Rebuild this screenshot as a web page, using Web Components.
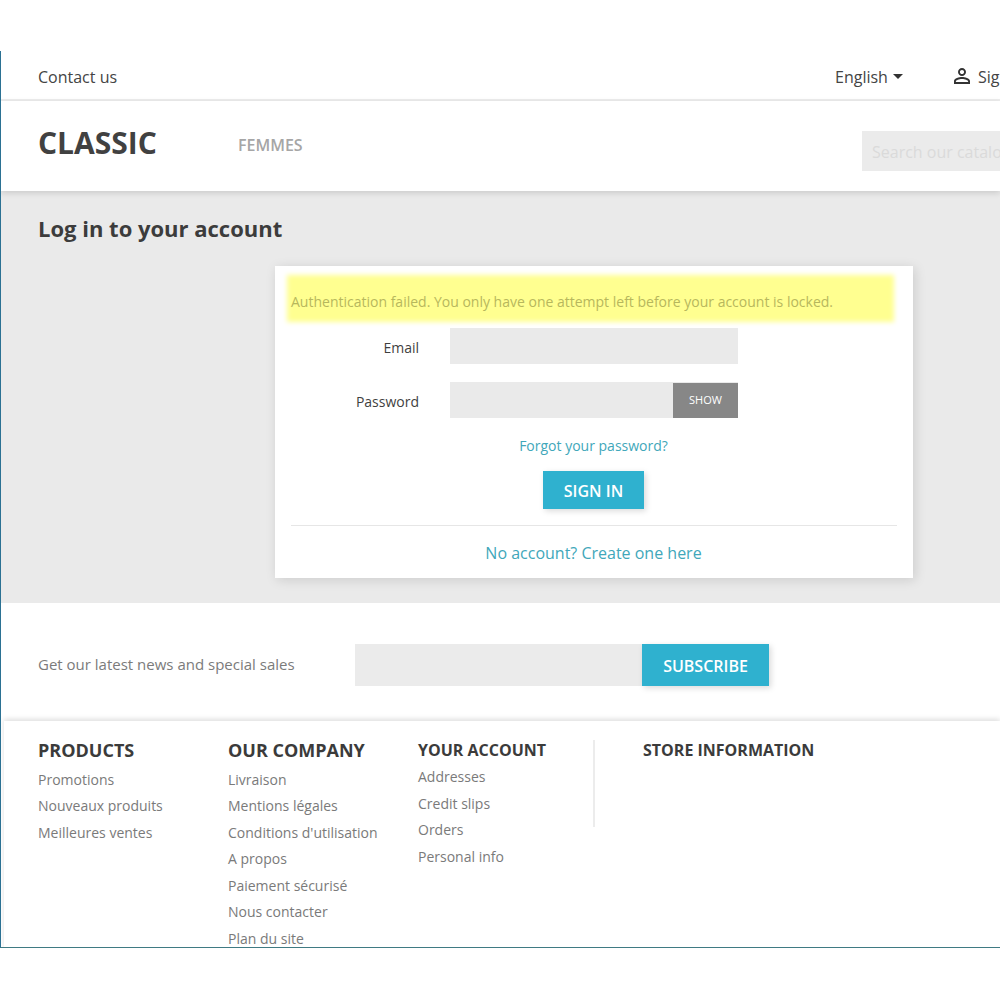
<!DOCTYPE html>
<html lang="en">
<head>
<meta charset="utf-8">
<title>Log in to your account</title>
<style>
  html, body { margin: 0; background: #fff; }
  body { font-family: "Open Sans", "Liberation Sans", sans-serif; padding-top: 51px; height: 949px; overflow: hidden; box-sizing: border-box; }
</style>
</head>
<body>
<shop-frame>
  <top-nav></top-nav>
  <shop-header></shop-header>
  <login-page></login-page>
  <news-letter></news-letter>
  <shop-footer>
    <footer-col slot="cols" heading="PRODUCTS" style="width:190px">
      <a>Promotions</a><a>Nouveaux produits</a><a>Meilleures ventes</a>
    </footer-col>
    <footer-col slot="cols" heading="OUR COMPANY" style="width:190px">
      <a>Livraison</a><a>Mentions légales</a><a>Conditions d'utilisation</a><a>A propos</a><a>Paiement sécurisé</a><a>Nous contacter</a><a>Plan du site</a>
    </footer-col>
    <footer-col slot="cols" heading="YOUR ACCOUNT" small style="width:175px">
      <a>Addresses</a><a>Credit slips</a><a>Orders</a><a>Personal info</a>
    </footer-col>
    <footer-col slot="store" heading="STORE INFORMATION" small></footer-col>
  </shop-footer>
</shop-frame>

<script>
// Small helper: every element gets an open shadow root from a string
class ShopElement extends HTMLElement {
  constructor() {
    super();
    const shadow = this.attachShadow({ mode: "open" });
    shadow.innerHTML = this.constructor.markup;
  }
}

class ShopFrame extends ShopElement {
  static markup = `
    <style>
      :host {
        display: block;
        height: 897px;
        overflow: hidden;
        box-sizing: border-box;
        border-left: 1px solid #2b7193;
        border-bottom: 1px solid #3f7a83;
        position: relative;
      }
    </style>
    <slot></slot>`;
}

class TopNav extends ShopElement {
  static markup = `
    <style>
      :host {
        display: flex;
        align-items: center;
        height: 48px;
        padding-left: 37px;
        border-bottom: 2px solid #ededed;
        color: #444;
        font-size: 16px;
        white-space: nowrap;
      }
      .contact { flex: 1; padding-top: 4px; }
      .lang { display: flex; align-items: center; gap: 5px; width: 115px; padding-top: 4px; }
      .caret { width: 0; height: 0; border: 5px solid transparent; border-top-color: #333; border-bottom: 0; margin-top: -2px; }
      .user { display: flex; align-items: center; gap: 4px; width: 50px; overflow: hidden; padding-top: 4px; flex: none; }
      svg { flex: none; display: block; width: 24px; height: 24px; fill: #333; margin-top: -2px; }
    </style>
    <span class="contact">Contact us</span>
    <span class="lang">English <i class="caret"></i></span>
    <span class="user">
      <svg viewBox="0 0 24 24"><path d="M12 5.9c1.16 0 2.1.94 2.1 2.1s-.94 2.1-2.1 2.1S9.9 9.16 9.9 8s.94-2.1 2.1-2.1m0 9c2.97 0 6.1 1.46 6.1 2.1v1.1H5.9V17c0-.64 3.13-2.1 6.1-2.1M12 4C9.79 4 8 5.79 8 8s1.79 4 4 4 4-1.79 4-4-1.79-4-4-4zm0 9c-2.67 0-8 1.34-8 4v3h16v-3c0-2.66-5.33-4-8-4z"/></svg>
      <span>Sign in</span>
    </span>`;
}

class ShopHeader extends ShopElement {
  static markup = `
    <style>
      :host {
        display: flex;
        align-items: center;
        height: 90px;
        padding-left: 37px;
        background: #fff;
        box-shadow: 0 2px 6px rgba(0,0,0,.14);
        position: relative;
        z-index: 1;
        white-space: nowrap;
      }
      .logo { width: 200px; font-size: 30px; font-weight: 700; color: #414141; padding-bottom: 7px; }
      .menu { flex: 1; font-size: 16px; font-weight: 600; color: #a6a6a6; padding-bottom: 3px; }
      .search {
        flex: none;
        width: 138px;
        height: 40px;
        margin-top: 10px;
        padding-left: 10px;
        box-sizing: border-box;
        background: #ebebeb;
        color: #dadada;
        font-size: 16px;
        line-height: 42px;
        overflow: hidden;
      }
    </style>
    <span class="logo">CLASSIC</span>
    <span class="menu">FEMMES</span>
    <div class="search">Search our catalog</div>`;
}

class LoginPage extends ShopElement {
  static markup = `
    <style>
      :host {
        display: block;
        height: 412px;
        box-sizing: border-box;
        background: #eaeaea;
        padding: 22px 0 0 37px;
      }
      h1 { margin: 0 0 23px; font-size: 22px; line-height: 30px; font-weight: 700; color: #3c3c3c; }
      login-card { margin-left: 237px; }
    </style>
    <h1>Log in to your account</h1>
    <login-card></login-card>`;
}

class LoginCard extends ShopElement {
  static markup = `
    <style>
      :host {
        display: block;
        width: 638px;
        height: 312px;
        box-sizing: border-box;
        background: #fff;
        padding: 9px 16px 0;
        box-shadow: 2px 2px 11px rgba(0,0,0,.13);
      }
      .alert {
        position: relative;
        height: 47px;
        margin: 0 3px 6px -4px;
        padding: 17px 0 0 4px;
        box-sizing: border-box;
        color: #b7b75d;
        font-size: 14px;
        line-height: 20px;
        white-space: nowrap;
      }
      /* the highlight has soft, hand-painted edges */
      .alert::before {
        content: "";
        position: absolute;
        inset: 0;
        background: #ffff90;
        filter: blur(2.5px);
      }
      .alert span { position: relative; }
      .row {
        display: grid;
        grid-template-columns: 128px 288px;
        column-gap: 31px;
        align-items: center;
        height: 36px;
        margin-bottom: 18px;
        color: #3f3f3f;
        font-size: 14px;
      }
      label { text-align: right; padding-top: 2px; }
      .input { height: 36px; background: #eaeaea; display: flex; justify-content: flex-end; align-items: flex-end; }
      .show {
        width: 65px;
        height: 35px;
        background: #878787;
        color: #fff;
        font-size: 11px;
        line-height: 33px;
        text-align: center;
      }
      .forgot { text-align: center; color: #41a7ba; font-size: 14px; line-height: 20px; width: 605px; }
      .action { display: flex; justify-content: center; margin: 15px 1px 0 0; }
      .signin {
        width: 101px;
        height: 38px;
        background: #2fb1cf;
        color: #fff;
        font-size: 16px;
        font-weight: 600;
        line-height: 40px;
        text-align: center;
        box-shadow: 2px 2px 6px rgba(0,0,0,.15);
      }
      hr { border: 0; border-top: 1px solid #e6e6e6; margin: 16px 0 0; }
      .create { text-align: center; color: #41a7ba; font-size: 16px; line-height: 22px; margin: 16px 1px 0 0; }
    </style>
    <div class="alert"><span>Authentication failed. You only have one attempt left before your account is locked.</span></div>
    <div class="row"><label>Email</label><div class="input"></div></div>
    <div class="row"><label>Password</label><div class="input"><span class="show">SHOW</span></div></div>
    <div class="forgot">Forgot your password?</div>
    <div class="action"><span class="signin">SIGN IN</span></div>
    <hr>
    <div class="create">No account? Create one here</div>`;
}

class NewsLetter extends ShopElement {
  static markup = `
    <style>
      :host {
        display: flex;
        align-items: center;
        height: 118px;
        padding: 0 0 0 37px;
        box-sizing: border-box;
        background: #fff;
      }
      .label { width: 317px; flex: none; color: #7b7b7b; font-size: 15px; white-space: nowrap; padding-top: 3px; }
      .form { display: flex; padding-top: 6px; }
      .input { width: 287px; height: 42px; background: #ebebeb; }
      .btn {
        width: 127px;
        height: 42px;
        background: #2fb1cf;
        color: #fff;
        font-size: 16px;
        font-weight: 600;
        line-height: 44px;
        text-align: center;
        box-shadow: 2px 2px 6px rgba(0,0,0,.15);
      }
    </style>
    <span class="label">Get our latest news and special sales</span>
    <div class="form"><div class="input"></div><div class="btn">SUBSCRIBE</div></div>`;
}

class ShopFooter extends ShopElement {
  static markup = `
    <style>
      :host {
        display: block;
        height: 228px;
        margin-left: 3px;
        box-sizing: border-box;
        padding: 20px 0 0 34px;
        background: #fff;
        box-shadow: 0 -2px 5px rgba(0,0,0,.13);
        position: relative;
      }
      .wrap { display: flex; align-items: flex-start; }
      .store { border-left: 2px solid #ececec; height: 86px; padding-left: 48px; margin-top: -1px; padding-top: 1px; }
    </style>
    <div class="wrap">
      <slot name="cols"></slot>
      <div class="store"><slot name="store"></slot></div>
    </div>`;
}

class FooterCol extends ShopElement {
  static markup = `
    <style>
      :host { display: block; flex: none; color: #7a7a7a; font-size: 14px; white-space: nowrap; }
      h3 { margin: 0 0 6.5px; font-size: 18px; line-height: 19px; font-weight: 700; color: #3b3b3b; }
      :host([small]) h3 { font-size: 16px; margin-bottom: 4px; }
      ::slotted(a) { display: block; line-height: 26.5px; }
    </style>
    <h3></h3>
    <slot></slot>`;

  connectedCallback() {
    this.shadowRoot.querySelector("h3").textContent = this.getAttribute("heading");
  }
}

customElements.define("shop-frame", ShopFrame);
customElements.define("top-nav", TopNav);
customElements.define("shop-header", ShopHeader);
customElements.define("login-card", LoginCard);
customElements.define("login-page", LoginPage);
customElements.define("news-letter", NewsLetter);
customElements.define("shop-footer", ShopFooter);
customElements.define("footer-col", FooterCol);
</script>
</body>
</html>
